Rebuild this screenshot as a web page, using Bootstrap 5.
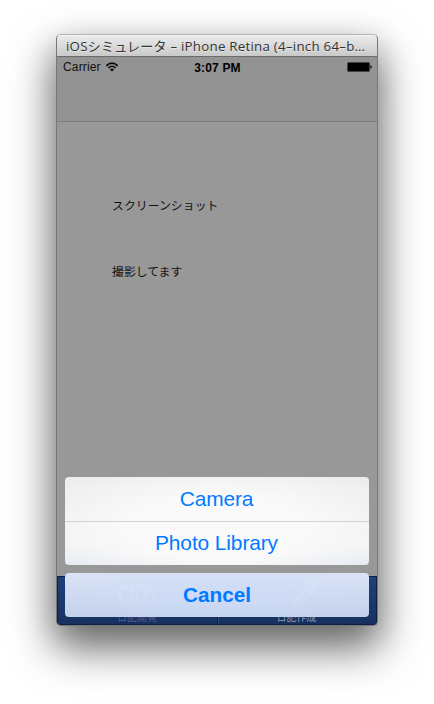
<!DOCTYPE html>
<html lang="ja">
<head>
<meta charset="utf-8">
<meta name="viewport" content="width=device-width, initial-scale=1">
<title>iOSシミュレータ</title>
<link href="https://cdn.jsdelivr.net/npm/bootstrap@5.3.0/dist/css/bootstrap.min.css" rel="stylesheet">
<style>
body{background:#fff;font-family:"Liberation Sans","Noto Sans CJK JP",sans-serif;height:704px;overflow:hidden;padding-top:34px}
.sim{width:322px;height:592px;border:1px solid #777;border-top-color:#b4b4b4;border-radius:5px;box-shadow:0 20px 44px 2px rgba(0,0,0,.56),0 12px 30px rgba(0,0,0,.14);background:#989898;overflow:hidden}
.titlebar{height:22px;padding:1px 9px 0;background:linear-gradient(#ececec,#c9c9c9);border-bottom:1px solid #6b6b6b;box-shadow:inset 0 1px #f4f4f4;color:#333;font:13px/20px "Open Sans","Noto Sans CJK JP",sans-serif;text-shadow:0 1px rgba(255,255,255,.45)}
.title-latin{letter-spacing:.25px;font-size:13.3px}
.title-kana{letter-spacing:.2px}
.screen{height:568px;color:#111}
.top-area{height:65px;background:#939393;border-bottom:1px solid #7d7d7d}
.status{height:20px;padding:0 5px 0 6px;font-size:12px;line-height:22px}
.clock{font-weight:700;color:#000;letter-spacing:.15px}
.carrier{letter-spacing:.15px}
.status-side{width:110px}
.content-area{padding-left:55px;font:11.9px/18px "Noto Sans CJK JP",sans-serif;color:#111}
.content-area p{margin:0}
.first-line{padding-top:74px}
.second-line{padding-top:48px}
.tabs{height:49px;background:linear-gradient(#20407a,#17305f);border:1px solid #0d1e42}
.tab-item{font:10px/13px "Noto Sans CJK JP",sans-serif;padding:0 1px 1px 0;color:#525b92}
.tab-item + .tab-item{border-left:1px solid #10244c;box-shadow:inset 1px 0 #294779;color:#8f99ab}
.sheet{left:8px;right:8px;bottom:8px}
.sheet-group{border-radius:4px;overflow:hidden;background:radial-gradient(ellipse 76% 95% at 50% 58%,rgba(250,250,250,1) 35%,rgba(250,250,250,0) 100%),linear-gradient(#e8e8e8 0,#eff0f0 75%,#dde3ed 100%)}
.sheet .action{height:44px;border:0;border-radius:0;padding:0 1px 0 0;font-size:20.9px;line-height:44px;letter-spacing:-.1px;color:#007aff;background:none}
.action + .action{box-shadow:inset 0 1px #d0d1d2}
.sheet .cancel{height:44px;border:0;border-radius:4px;padding:0;font-size:20.7px;font-weight:700;line-height:44px;color:#007aff;background:radial-gradient(ellipse 65% 100% at 50% 48%,rgba(205,220,249,.8),rgba(205,220,249,0)),linear-gradient(#dde5f5,#c2cfe9);position:relative}
.ghosts{left:0;top:0;pointer-events:none}
</style>
<script src="https://cdn.jsdelivr.net/npm/bootstrap@5.3.0/dist/js/bootstrap.bundle.min.js"></script>
</head>
<body>
<main class="sim mx-auto">
  <header class="titlebar text-nowrap"><span class="title-latin">iOS</span><span class="title-kana">シミュレータ</span><span class="title-latin"> – iPhone Retina (4–inch 64–b…</span></header>
  <div class="screen d-flex flex-column position-relative">
    <div class="top-area">
      <div class="status d-flex justify-content-between">
        <div class="status-side d-flex align-items-center"><span class="carrier">Carrier</span>
          <svg class="ms-1" width="14" height="10" viewBox="0 0 14 10" fill="none" stroke="#080808" stroke-width="1.6"><path d="M1.3 3.8Q7-1.6 12.7 3.8M3.4 6Q7 2.5 10.6 6"/><path d="M7 9.5 4.9 7.4Q7 5.6 9.1 7.4Z" fill="#080808" stroke="none"/></svg>
        </div>
        <span class="clock">3:07 PM</span>
        <div class="status-side d-flex align-items-center justify-content-end">
          <svg width="25" height="10" viewBox="0 0 25 10"><rect x=".5" y=".5" width="22" height="9" rx="1" fill="#000" stroke="#444"/><path d="M23.3 3Q24.8 3.5 24.8 5T23.3 7Z" fill="#111"/></svg>
        </div>
      </div>
    </div>
    <section class="content-area flex-grow-1">
      <p class="first-line">スクリーンショット</p>
      <p class="second-line">撮影してます</p>
    </section>
    <nav class="tabs d-flex">
      <div class="tab-item flex-fill w-50 d-flex align-items-end justify-content-center">日記閲覧</div>
      <div class="tab-item flex-fill w-50 d-flex align-items-end justify-content-center">日記作成</div>
    </nav>
    <div class="sheet position-absolute d-grid gap-2">
      <div class="sheet-group d-grid">
        <button type="button" class="btn action">Camera</button>
        <button type="button" class="btn action">Photo Library</button>
      </div>
      <button type="button" class="btn cancel">
        <svg class="ghosts position-absolute" width="304" height="44" viewBox="0 0 304 44" fill="none" stroke="#fff" stroke-opacity=".09" stroke-width="3"><path d="M55 29V14h12v15zM72 29V14h9v15M84 12l6 17M231 28l16-19 4 4-15 17-6 2z"/></svg>
        Cancel
      </button>
    </div>
  </div>
</main>
</body>
</html>
